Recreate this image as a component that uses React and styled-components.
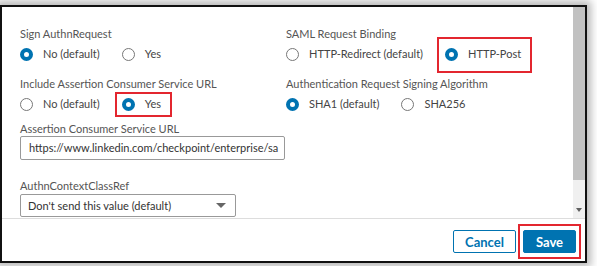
import React from 'react'
import styled, {createGlobalStyle} from 'styled-components'

const GlobalStyles = createGlobalStyle`
	html, body {
		margin: 0;
		padding: 0;
		background: #fff;
		font-family: Lato, "Noto Sans", sans-serif;
	}
`

const Page = styled.div`
	width: 597px;
	height: 266px;
	padding-top: 5px;
	box-sizing: border-box;
	overflow: hidden;
`

const Dialog = styled.div`
	width: 587px;
	height: 258px;
	box-sizing: border-box;
	border: 2px solid #111;
	background: #fff;
	box-shadow: 0 0 8px 4px rgba(0, 0, 0, 0.28);
	display: flex;
	flex-direction: column;
`

const Body = styled.div`
	display: flex;
	height: 211px;
`

const Content = styled.div`
	flex: 1;
	overflow: hidden;
	padding: 19px 0 0 18px;
`

const ScrollBar = styled.div`
	width: 12px;
	display: flex;
	flex-direction: column;
	background: #f0f0f0;
`

const Thumb = styled.div`
	height: 173px;
	background: #c1c1c1;
`

const Track = styled.div`
	flex: 1;
	display: flex;
	align-items: flex-end;
	justify-content: center;
	padding-bottom: 6px;
`

const ArrowDown = styled.div`
	width: 0;
	height: 0;
	border-left: 3px solid transparent;
	border-right: 3px solid transparent;
	border-top: 4px solid #606060;
`

const FieldGrid = styled.div`
	display: grid;
	grid-template-columns: 266px 1fr;
	row-gap: 10px;
`

const Field = styled.div`
	display: flex;
	flex-direction: column;
	margin-top: ${p => p.$top || 0}px;
`

const Label = styled.div`
	font-size: 11px;
	line-height: ${p => p.$line || 16}px;
	color: #555;
	margin-bottom: ${p => p.$gap ?? 0}px;
`

const RadioRow = styled.div`
	display: flex;
	align-items: center;
	height: 24px;
`

const Option = styled.label`
	position: relative;
	display: flex;
	align-items: center;
	gap: 10px;
	margin-right: 22px;
	font-size: 11px;
	line-height: 16px;
	color: #444;

	${p => p.$mark && `
		&::after {
			content: '';
			position: absolute;
			left: ${-p.$mark[0]}px;
			right: ${-p.$mark[1]}px;
			top: ${-p.$mark[2]}px;
			bottom: ${-p.$mark[3]}px;
			border: 2px solid #e3262f;
		}
	`}
`

const Radio = styled.span`
	width: 13px;
	height: 13px;
	box-sizing: border-box;
	border-radius: 50%;
	border: ${p => (p.$checked ? '4px solid #0073b1' : '1px solid #777')};
	background: #fff;
`

const TextInput = styled.div`
	width: 265px;
	height: 24px;
	box-sizing: border-box;
	border: 1px solid #999;
	border-radius: 2px;
	padding: 0 8px;
	font-size: 11px;
	line-height: 22px;
	color: #333;
	white-space: nowrap;
	overflow: hidden;
`

const Select = styled.div`
	width: 216px;
	height: 23px;
	box-sizing: border-box;
	border: 1px solid #999;
	border-radius: 2px;
	padding: 0 8px 0 7px;
	display: flex;
	align-items: center;
	justify-content: space-between;
	font-size: 11px;
	color: #333;
`

const Caret = styled.span`
	width: 0;
	height: 0;
	border-left: 5px solid transparent;
	border-right: 5px solid transparent;
	border-top: 5px solid #666;
	margin-right: 1px;
`

const Footer = styled.div`
	flex: 1;
	border-top: 1px solid #ddd;
	display: flex;
	justify-content: flex-end;
	align-items: flex-start;
	gap: 7px;
	padding: 11px 9px 0 0;
`

const Button = styled.button`
	position: relative;
	height: 23px;
	padding: 0 ${p => (p.$primary ? 12 : 11)}px;
	border: 1px solid #0073b1;
	border-radius: 2px;
	background: ${p => (p.$primary ? '#0073b1' : '#fff')};
	color: ${p => (p.$primary ? '#fff' : '#0073b1')};
	font-family: Lato, sans-serif;
	font-size: 13px;
	font-weight: 700;

	${p => p.$mark && `
		&::after {
			content: '';
			position: absolute;
			inset: -7px -6px -7px -6px;
			border: 2px solid #e3262f;
		}
	`}
`

const RadioGroup = ({label, options, checked, marks = {}}) => (
	<Field>
		<Label>{label}</Label>
		<RadioRow>
			{options.map((o, i) => (
				<Option key={o} $mark={marks[i]}>
					<Radio $checked={i === checked}/>
					{o}
				</Option>
			))}
		</RadioRow>
	</Field>
)

export default function App() {
	return (
		<Page>
			<GlobalStyles/>
			<Dialog>
				<Body>
					<Content>
						<FieldGrid>
							<RadioGroup label="Sign AuthnRequest" options={['No (default)', 'Yes']} checked={0}/>
							<RadioGroup
								label="SAML Request Binding"
								options={['HTTP-Redirect (default)', 'HTTP-Post']}
								checked={1}
								marks={{1: [8, 11, 9, 11]}}
							/>
							<RadioGroup
								label="Include Assertion Consumer Service URL"
								options={['No (default)', 'Yes']}
								checked={1}
								marks={{1: [7, 11, 4, 5]}}
							/>
							<RadioGroup
								label="Authentication Request Signing Algorithm"
								options={['SHA1 (default)', 'SHA256']}
								checked={0}
							/>
						</FieldGrid>
						<Field $top={6}>
							<Label $line={14} $gap={0}>Assertion Consumer Service URL</Label>
							<TextInput>https://www.linkedin.com/checkpoint/enterprise/sa</TextInput>
						</Field>
						<Field $top={19}>
							<Label $line={14} $gap={1}>AuthnContextClassRef</Label>
							<Select>
								Don't send this value (default)
								<Caret/>
							</Select>
						</Field>
					</Content>
					<ScrollBar>
						<Thumb/>
						<Track><ArrowDown/></Track>
					</ScrollBar>
				</Body>
				<Footer>
					<Button>Cancel</Button>
					<Button $primary $mark>Save</Button>
				</Footer>
			</Dialog>
		</Page>
	)
}
